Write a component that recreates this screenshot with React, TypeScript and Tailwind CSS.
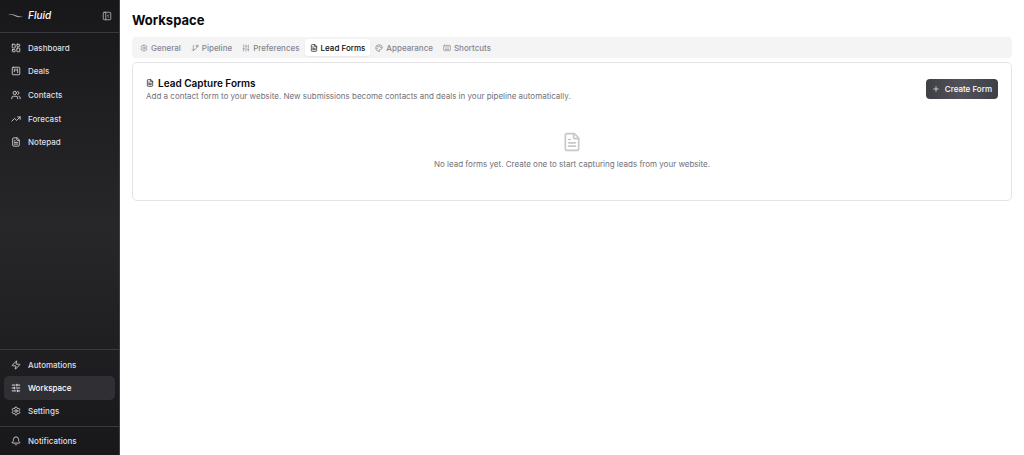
import React from 'react'
import {
    Bell,
    FileText,
    Keyboard,
    LayoutDashboard,
    Palette,
    PanelLeftClose,
    Plus,
    Settings,
    SlidersHorizontal,
    SlidersVertical,
    SquareKanban,
    TrendingUp,
    Users,
    Zap,
} from 'lucide-react'
import type { LucideIcon } from 'lucide-react'

type Item = { label: string; icon: LucideIcon; active?: boolean }

const mainItems: Item[] = [
    { label: 'Dashboard', icon: LayoutDashboard },
    { label: 'Deals', icon: SquareKanban },
    { label: 'Contacts', icon: Users },
    { label: 'Forecast', icon: TrendingUp },
    { label: 'Notepad', icon: FileText },
]

const footerItems: Item[] = [
    { label: 'Automations', icon: Zap },
    { label: 'Workspace', icon: SlidersHorizontal, active: true },
    { label: 'Settings', icon: Settings },
]

const PipelineIcon = () => (
    <svg
        className="size-2"
        viewBox="0 0 24 24"
        fill="none"
        stroke="currentColor"
        strokeWidth="2"
        strokeLinecap="round"
        strokeLinejoin="round"
    >
        <path d="m3 16 4 4 4-4M7 20V4" />
        <circle cx="18" cy="6" r="3" />
        <path d="M18 9c0 4-3 6-7 7" />
    </svg>
)

const tabs = [
    { label: 'General', icon: <Settings className="size-2" /> },
    { label: 'Pipeline', icon: <PipelineIcon /> },
    { label: 'Preferences', icon: <SlidersVertical className="size-2" /> },
    { label: 'Lead Forms', icon: <FileText className="size-2" />, active: true },
    { label: 'Appearance', icon: <Palette className="size-2" /> },
    { label: 'Shortcuts', icon: <Keyboard className="size-2" /> },
]

const NavLink = ({ label, icon: Icon, active }: Item) => (
    <a
        href="#"
        className={`flex items-center gap-[7px] rounded-[5px] px-[7px] text-[8px] font-medium ${
            active ? 'bg-[#2f2f34] text-white' : 'text-[#dedee2]'
        }`}
    >
        <Icon className="size-[10px]" />
        {label}
    </a>
)

const Sidebar = () => (
    <aside className="flex w-[120px] shrink-0 flex-col border-r border-[#3f3f46] bg-linear-to-b from-[#18181b] via-[#27272a] to-[#18181b]">
        <div className="flex h-[33px] items-center border-b border-[#3a3a3e] pr-[7px] pb-px pl-2">
            <svg className="mr-[5px] h-[6px] w-[15px]" viewBox="0 0 15 6" fill="none">
                <path d="M0 1.2C4 .4 6 1.6 8.5 2.6S12.500 3.800 15 3.200C12 5 9.500 4.200 7.500 3.200S3.500 1.400 0 1.200Z" fill="#b4b4b8" />
            </svg>
            <span className="text-[10px] font-medium text-white italic">Fluid</span>
            <button aria-label="Collapse sidebar" className="ml-auto text-[#b4b4bc]">
                <PanelLeftClose className="size-[10px]" />
            </button>
        </div>
        <nav className="grid h-[124px] auto-rows-fr px-1 py-[3px]">
            {mainItems.map((item) => (
                <NavLink key={item.label} {...item} />
            ))}
        </nav>
        <nav className="mt-auto grid h-[77px] auto-rows-fr border-t border-[#3a3a3e] px-1 py-[3px]">
            {footerItems.map((item) => (
                <NavLink key={item.label} {...item} />
            ))}
        </nav>
        <div className="grid h-[29px] border-t border-[#3a3a3e] px-1">
            <NavLink label="Notifications" icon={Bell} />
        </div>
    </aside>
)

const App = () => {
    return (
        <div className="flex min-h-screen bg-white font-['Inter',sans-serif] text-[#09090b]">
            <Sidebar />
            <main className="min-w-0 flex-1 p-3">
                <h1 className="text-[13px] leading-4 font-bold">Workspace</h1>
                <div role="tablist" className="mt-[9px] flex h-[21px] rounded-[4px] bg-[#f4f4f5] px-[3px] py-[2px]">
                    {tabs.map((tab) => (
                        <button
                            key={tab.label}
                            role="tab"
                            aria-selected={!!tab.active}
                            className={`flex items-center gap-[3px] rounded-[3px] px-[5px] text-[8px] font-medium ${
                                tab.active ? 'bg-white text-[#09090b] shadow-xs' : 'text-[#85858d]'
                            }`}
                        >
                            {tab.icon}
                            {tab.label}
                        </button>
                    ))}
                </div>

                <section className="mt-1 rounded-[5px] border border-[#e4e4e7] px-[13px] pt-[14px] pb-[31px]">
                    <div className="flex items-center justify-between">
                        <div>
                            <h2 className="flex items-center gap-1 text-[10px] leading-3 font-semibold">
                                <FileText className="size-2" />
                                Lead Capture Forms
                            </h2>
                            <p className="mt-[2px] text-[8px] leading-[10px] text-[#71717a]">
                                Add a contact form to your website. New submissions become contacts and deals in your
                                pipeline automatically.
                            </p>
                        </div>
                        <button className="flex h-[20px] items-center gap-[5px] rounded-[4px] bg-linear-to-r from-[#3f3f46] via-[#52525b] to-[#3f3f46] px-[6px] text-[8px] font-medium text-white">
                            <Plus className="size-2" />
                            Create Form
                        </button>
                    </div>
                    <div className="mt-[31px] flex flex-col items-center">
                        <FileText className="size-5 text-[#c8c8cb]" />
                        <p className="mt-[7px] text-[8px] leading-[10px] text-[#71717a]">
                            No lead forms yet. Create one to start capturing leads from your website.
                        </p>
                    </div>
                </section>
            </main>
        </div>
    )
}

export default App
